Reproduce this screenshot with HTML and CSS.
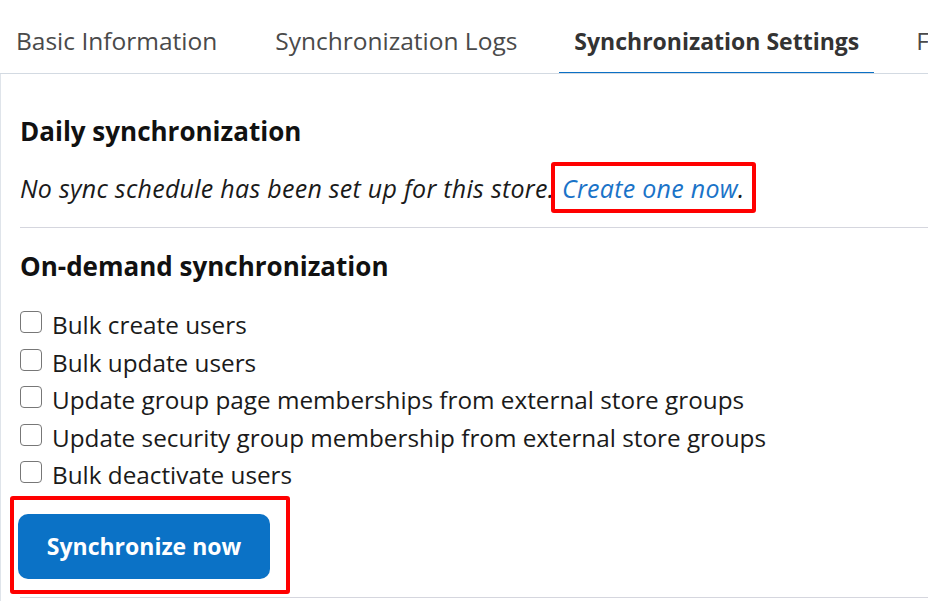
FILE: index.html
```html
<!DOCTYPE html>
<html lang="en">
<head>
<meta charset="utf-8">
<title>Synchronization Settings</title>
<link rel="stylesheet" href="styles.css">
</head>
<body>
<nav class="tabs">
  <a class="tab">Basic Information</a>
  <a class="tab">Synchronization Logs</a>
  <a class="tab active">Synchronization Settings</a>
  <a class="tab">Fields</a>
</nav>
<main class="panel">
  <section class="section daily">
    <h2 class="heading">Daily synchronization</h2>
    <p class="note">No sync schedule has been set up for this store. <span class="mark mark-link"><a class="link">Create one now</a>.</span></p>
  </section>
  <section class="section ondemand">
    <h2 class="heading">On-demand synchronization</h2>
    <ul class="checks">
      <li class="check"><input type="checkbox" class="box"><span>Bulk create users</span></li>
      <li class="check"><input type="checkbox" class="box"><span>Bulk update users</span></li>
      <li class="check"><input type="checkbox" class="box"><span>Update group page memberships from external store groups</span></li>
      <li class="check"><input type="checkbox" class="box"><span>Update security group membership from external store groups</span></li>
      <li class="check"><input type="checkbox" class="box"><span>Bulk deactivate users</span></li>
    </ul>
    <div class="mark mark-button">
      <button class="btn">Synchronize now</button>
    </div>
  </section>
</main>
</body>
</html>
```
FILE: styles.css
```css
html, body {
  margin: 0;
  padding: 0;
  background: #ffffff;
  overflow: hidden;
}
body {
  font-family: "Open Sans", "Noto Sans", sans-serif;
  color: #111;
  width: 928px;
  height: 601px;
}
.tabs {
  display: flex;
  white-space: nowrap;
  overflow: hidden;
  border-bottom: 1px solid #d3dae2;
  height: 73px;
}
.tab {
  display: block;
  flex: none;
  padding: 26px 16px 16px;
  margin-right: 26px;
  margin-bottom: -2px;
  font-size: 24.5px;
  line-height: 30px;
  color: #4a4a4a;
  border-bottom: 3px solid transparent;
  cursor: pointer;
}
.tab.active {
  padding-left: 15px;
  padding-right: 15px;
  font-size: 23px;
  font-weight: 700;
  color: #333;
  border-bottom-color: #0b70c5;
}
.panel {
  border-left: 1px solid #dfe4ea;
  padding-left: 19px;
  height: 527px;
}
.section {
  border-bottom: 1px solid #d5d6de;
}
.daily {
  padding-top: 40px;
  padding-bottom: 24px;
}
.ondemand {
  padding-top: 21px;
  padding-bottom: 3px;
}
.heading {
  margin: 0;
  font-size: 26px;
  line-height: 34px;
  font-weight: 700;
  color: #111;
}
.note {
  margin: 25px 0 0;
  font-size: 25px;
  line-height: 30px;
  letter-spacing: 0.27px;
  font-style: italic;
  color: #1a1a1a;
}
.link {
  color: #1a73c8;
  cursor: pointer;
}
.mark {
  border: 4px solid #ff0000;
  border-radius: 3px;
}
.mark-link {
  display: inline-block;
  padding: 7px 8px 6px 7px;
  margin: -11px -12px -10px -10px;
  line-height: 30px;
}
.checks {
  list-style: none;
  margin: 23px 0 0;
  padding: 0;
}
.check {
  display: flex;
  align-items: baseline;
  font-size: 24.3px;
  line-height: 37.6px;
  color: #1a1a1a;
}
.box {
  appearance: none;
  -webkit-appearance: none;
  flex: none;
  width: 22px;
  height: 22px;
  margin: 0 10px 0 0;
  border: 1.5px solid #777;
  border-radius: 4px;
  background: #fff;
  position: relative;
  top: -1px;
}
.mark-button {
  width: 280px;
  box-sizing: border-box;
  margin: 2px 0 0 -10px;
  padding: 14px 16px 11px 4px;
}
.btn {
  display: block;
  width: 252px;
  height: 65px;
  padding: 0;
  border: 0;
  border-radius: 10px;
  background: #0b72c6;
  color: #fff;
  font-family: "Open Sans", "Noto Sans", sans-serif;
  font-size: 23px;
  font-weight: 700;
  cursor: pointer;
}
```
